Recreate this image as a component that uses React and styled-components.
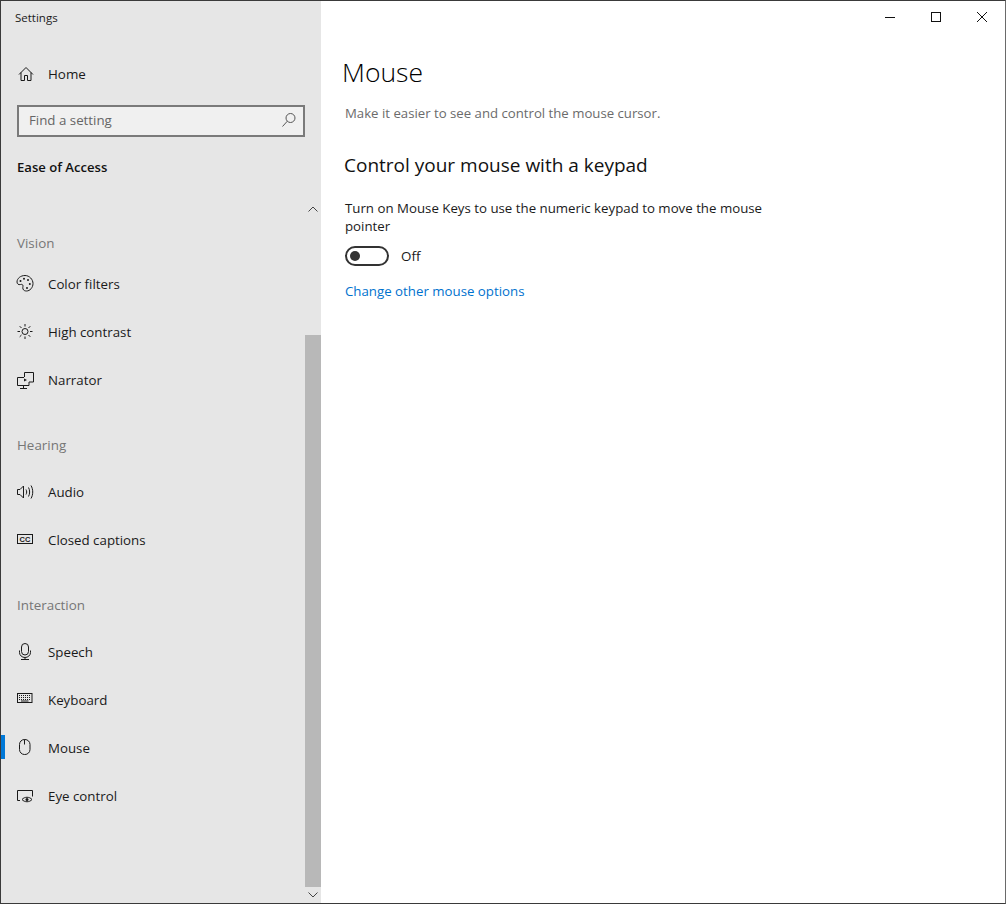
import React from "react";
import styled, { createGlobalStyle, css } from "styled-components";

const GlobalStyle = createGlobalStyle`
  html, body { margin: 0; padding: 0; background: #fff; }
  body { font-family: "Open Sans", "Noto Sans", "Liberation Sans", sans-serif; color: #1a1a1a; }
  * { box-sizing: border-box; }
`;

const Window = styled.div`
  display: flex;
  width: 1006px;
  height: 904px;
  border: 1px solid #3a3a3a;
  border-right-color: #6a6a6a;
  overflow: hidden;
  background: #fff;
`;

const Sidebar = styled.aside`
  display: flex;
  flex-direction: column;
  flex: 0 0 320px;
  background: #e6e6e6;
`;

const AppTitle = styled.div`
  height: 49px;
  padding: 9px 0 0 14px;
  font-size: 11.5px;
  line-height: 16px;
`;

const HomeRow = styled.div`
  display: flex;
  align-items: center;
  height: 48px;
  padding-left: 14px;
  font-size: 13.4px;
`;

const IconSlot = styled.span`
  display: flex;
  flex: 0 0 33px;
  svg { display: block; }
`;

const SearchBox = styled.label`
  display: flex;
  align-items: center;
  justify-content: space-between;
  width: 288px;
  height: 32px;
  margin: 7px 0 0 16px;
  padding: 0 6px 2px 10px;
  background: #f0f0f0;
  border: 2px solid #7a7a7a;
`;

const SearchInput = styled.input`
  flex: 1;
  min-width: 0;
  padding: 0;
  border: 0;
  outline: 0;
  background: transparent;
  font: inherit;
  font-size: 13.3px;
  &::placeholder { color: #666; opacity: 1; }
`;

const SectionTitle = styled.div`
  margin: 20px 0 0 16px;
  font-size: 13.1px;
  line-height: 20px;
  font-weight: 600;
  color: #111;
`;

const ScrollArea = styled.div`
  display: flex;
  flex: 1;
  min-height: 0;
  margin-top: 24px;
`;

const NavList = styled.nav`
  flex: 1;
  padding-top: 32px;
`;

const GroupLabel = styled.div`
  height: 20px;
  margin: ${p => (p.$first ? "0 0 7px" : "31px 0 13px")} 16px;
  font-size: 13.4px;
  line-height: 20px;
  color: #767676;
`;

const NavRow = styled.div`
  position: relative;
  display: flex;
  align-items: center;
  height: 48px;
  padding-left: 14px;
  font-size: 13.3px;
  ${p => p.$active && css`
    &::before {
      content: "";
      position: absolute;
      left: 0;
      top: 11px;
      width: 4px;
      height: 24px;
      background: #0078d7;
    }
  `}
`;

const Rail = styled.div`
  display: flex;
  flex-direction: column;
  flex: 0 0 16px;
`;

const RailArrow = styled.div`
  display: flex;
  align-items: center;
  justify-content: center;
  height: 16px;
`;

const RailThumb = styled.div`
  height: 552px;
  margin-top: 118px;
  background: #b8b8b8;
`;

const Main = styled.main`
  flex: 1;
  display: flex;
  flex-direction: column;
  min-width: 0;
`;

const TitleBar = styled.div`
  display: flex;
  justify-content: flex-end;
  height: 32px;
`;

const WinButton = styled.div`
  display: flex;
  align-items: center;
  justify-content: center;
  width: 46px;
`;

const Content = styled.div`
  padding: 19px 0 0 24px;
`;

const PageTitle = styled.h1`
  margin: 0 0 0 -3px;
  font-size: 26.5px;
  line-height: 40px;
  font-weight: 300;
  color: #000;
`;

const Description = styled.p`
  margin: 11px 0 0;
  font-size: 13.2px;
  line-height: 20px;
  color: #6b6b6b;
`;

const Heading = styled.h2`
  margin: 28px 0 0 -1px;
  font-size: 19px;
  line-height: 28px;
  font-weight: 400;
  color: #111;
`;

const Body = styled.p`
  width: 440px;
  margin: 20px 0 0;
  font-size: 13.27px;
  line-height: 18px;
`;

const ToggleRow = styled.div`
  display: flex;
  align-items: center;
  gap: 12px;
  margin-top: 11px;
  font-size: 13.4px;
`;

const Toggle = styled.span`
  display: flex;
  align-items: center;
  width: 44px;
  height: 20px;
  padding-left: 3px;
  border: 2px solid #333;
  border-radius: 10px;
  &::after {
    content: "";
    width: 10px;
    height: 10px;
    border-radius: 50%;
    background: #333;
  }
`;

const Link = styled.a`
  display: block;
  margin-top: 15px;
  font-size: 13.27px;
  line-height: 20px;
  color: #0072ce;
`;

const Icon = ({ children }) => (
  <svg width="20" height="20" viewBox="0 0 20 20" fill="none" stroke="#1a1a1a" strokeWidth="1">
    {children}
  </svg>
);

const Dot = ({ x, y }) => <circle cx={x} cy={y} r="1" fill="#1a1a1a" stroke="none" />;

const icons = {
  home: <path d="M4 10.5 11 3.5l7 7M6 8.5v8h3.5v-5h3v5H16v-8" />,
  palette: (
    <>
      <path d="M10 1.5C5.5 1.5 2 4.500 2 8c0 2 1.500 3 3.500 2.500 1.500-.4 2.500 0 2.500 1.500 0 1-.5 1.500 0 3 .5 1.500 2 2 3.500 2C15 17 18 13.500 18 9.500S14.500 1.500 10 1.500Z" />
      <Dot x={5.5} y={7} />
      <Dot x={9} y={4.8} />
      <Dot x={13} y={6} />
      <Dot x={14.8} y={10} />
      <Dot x={12} y={14} />
    </>
  ),
  sun: (
    <>
      <circle cx="10" cy="9.5" r="3" />
      <path d="M10 2v2.500M10 14.500V17M2.500 9.500H5M15 9.500h2.500M4.700 4.200l1.800 1.800M13.500 13l1.800 1.800M15.300 4.200 13.500 6M6.500 13l-1.800 1.800" />
    </>
  ),
  narrator: (
    <>
      <path d="M9.5 7V2.500h9V12H14M2.500 7.500H9M2.500 7.500v8H14V12M8.500 15.500v3M5 18.500h7" />
      <path d="M9 8.500l3 1.500-3 1.500z" fill="#1a1a1a" stroke="none" />
    </>
  ),
  audio: (
    <>
      <path d="M2.5 7.500v5H5l3.500 3.500V4L5 7.500z" />
      <path d="M11 7.500c.9 1.500.9 3.500 0 5M13.500 5.500c1.500 2.500 1.500 6.500 0 9M16 3.500c2.300 3.800 2.300 9.200 0 13" />
    </>
  ),
  captions: (
    <>
      <rect x="2.5" y="4.5" width="15" height="9" />
      <text x="10" y="12" fontSize="7.5" fontWeight="700" fill="#1a1a1a" stroke="none" textAnchor="middle" fontFamily="Liberation Sans, sans-serif">CC</text>
    </>
  ),
  speech: (
    <>
      <rect x="6.5" y="1.5" width="7" height="11.5" rx="3.5" />
      <path d="M4.5 8.500v2a5.500 5 0 0 0 11 0v-2M10 15.500v2.500M6 17.500h8" />
    </>
  ),
  keyboard: (
    <>
      <rect x="2.5" y="3.5" width="14.5" height="9" />
      <path d="M4 5.500h11.500M4 7.500h11.500M4 9.500h11.500" strokeDasharray="1 1" />
      <path d="M6 11h7.500" />
    </>
  ),
  mouse: (
    <>
      <rect x="4.5" y="1.5" width="10.5" height="15" rx="5" />
      <path d="M9.5 1.500v5" />
    </>
  ),
  eye: (
    <>
      <path d="M5 14.500H2.500v-10h15v6" />
      <path d="M7 13.500c2.500-3 7.500-3 10 0-2.500 3-7.500 3-10 0Z" />
      <circle cx="12" cy="13.5" r="1.5" fill="#1a1a1a" stroke="none" />
    </>
  ),
};

const groups = [
  { label: "Vision", items: [["palette", "Color filters"], ["sun", "High contrast"], ["narrator", "Narrator"]] },
  { label: "Hearing", items: [["audio", "Audio"], ["captions", "Closed captions"]] },
  { label: "Interaction", items: [["speech", "Speech"], ["keyboard", "Keyboard"], ["mouse", "Mouse", true], ["eye", "Eye control"]] },
];

const Chevron = ({ up }) => (
  <svg width="10" height="6" viewBox="0 0 10 6" fill="none" stroke="#444" strokeWidth="1">
    <path d={up ? "M.5 5.500 5 1l4.500 4.500" : "M.5.500 5 5 9.500.500"} />
  </svg>
);

export default function App() {
  return (
    <>
      <GlobalStyle />
      <Window>
        <Sidebar>
          <AppTitle>Settings</AppTitle>
          <HomeRow>
            <IconSlot><Icon>{icons.home}</Icon></IconSlot>
            Home
          </HomeRow>
          <SearchBox>
            <SearchInput placeholder="Find a setting" readOnly />
            <svg width="16" height="16" viewBox="0 0 16 16" fill="none" stroke="#555" strokeWidth="1">
              <circle cx="9.5" cy="6" r="4.5" />
              <path d="M6.300 9.200 1.500 14.500" />
            </svg>
          </SearchBox>
          <SectionTitle>Ease of Access</SectionTitle>
          <ScrollArea>
            <NavList>
              {groups.map((g, i) => (
                <section key={g.label}>
                  <GroupLabel $first={i === 0}>{g.label}</GroupLabel>
                  {g.items.map(([icon, text, active]) => (
                    <NavRow key={text} $active={active}>
                      <IconSlot><Icon>{icons[icon]}</Icon></IconSlot>
                      {text}
                    </NavRow>
                  ))}
                </section>
              ))}
            </NavList>
            <Rail>
              <RailArrow><Chevron up /></RailArrow>
              <RailThumb />
              <RailArrow><Chevron /></RailArrow>
            </Rail>
          </ScrollArea>
        </Sidebar>
        <Main>
          <TitleBar>
            <WinButton>
              <svg width="10" height="10" viewBox="0 0 10 10" stroke="#111" fill="none"><path d="M0 5.500h10" /></svg>
            </WinButton>
            <WinButton>
              <svg width="10" height="10" viewBox="0 0 10 10" stroke="#111" fill="none"><rect x=".5" y=".5" width="9" height="9" /></svg>
            </WinButton>
            <WinButton>
              <svg width="10" height="10" viewBox="0 0 10 10" stroke="#111" fill="none"><path d="M0 0l10 10M10 0 0 10" /></svg>
            </WinButton>
          </TitleBar>
          <Content>
            <PageTitle>Mouse</PageTitle>
            <Description>Make it easier to see and control the mouse cursor.</Description>
            <Heading>Control your mouse with a keypad</Heading>
            <Body>Turn on Mouse Keys to use the numeric keypad to move the mouse pointer</Body>
            <ToggleRow>
              <Toggle />
              Off
            </ToggleRow>
            <Link>Change other mouse options</Link>
          </Content>
        </Main>
      </Window>
    </>
  );
}
